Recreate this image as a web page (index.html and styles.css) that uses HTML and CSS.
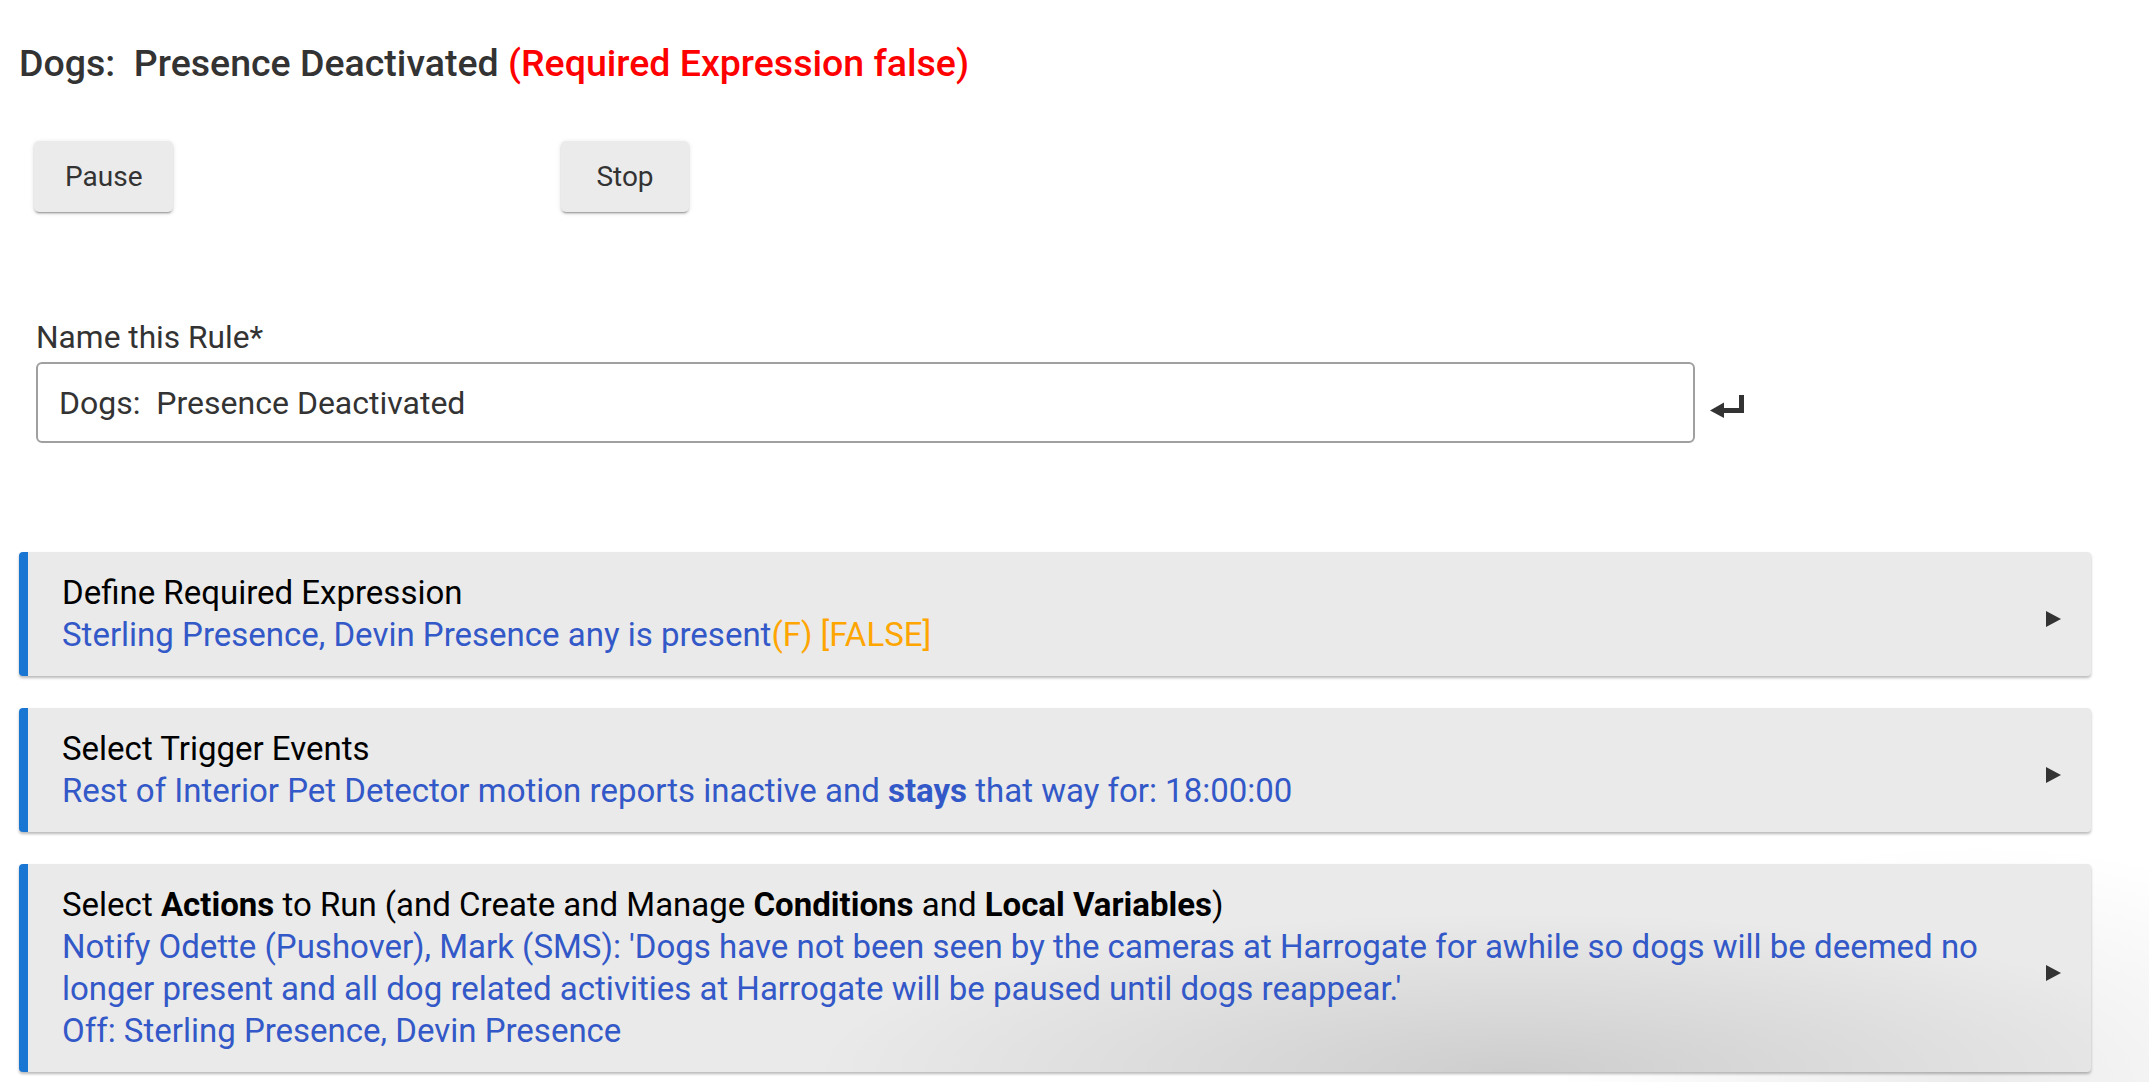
FILE: index.html
```html
<!DOCTYPE html>
<html lang="en">
<head>
    <meta charset="UTF-8">
    <meta name="viewport" content="width=device-width, initial-scale=1.0">
    <title>Dogs: Presence Deactivated</title>
    <link rel="stylesheet" href="styles.css">
</head>
<body>
    <div class="page">
        <h2 class="rule-title">Dogs:&nbsp; Presence Deactivated <span class="state-false">(Required Expression false)</span></h2>

        <div class="button-row">
            <div class="cell"><button class="btn">Pause</button></div>
            <div class="cell"><button class="btn">Stop</button></div>
        </div>

        <div class="name-field">
            <label for="ruleName">Name this Rule*</label>
            <div class="input-row">
                <input id="ruleName" type="text" value="Dogs:  Presence Deactivated">
                <svg class="enter-icon" viewBox="0 0 35 23" aria-hidden="true">
                    <rect x="29" y="0" width="5" height="18" fill="#333"/>
                    <rect x="13" y="13" width="21" height="5" fill="#333"/>
                    <polygon points="0,15.5 14,7.5 14,23" fill="#333"/>
                </svg>
            </div>
        </div>

        <div class="sections">
            <div class="section-card">
                <div class="section-text">
                    <div class="section-title">Define Required Expression</div>
                    <div class="section-desc">Sterling Presence, Devin Presence any is present<span class="eval">(F) [FALSE]</span></div>
                </div>
                <svg class="arrow" viewBox="0 0 15 16"><polygon points="0,0 15,8 0,16" fill="#333"/></svg>
            </div>

            <div class="section-card">
                <div class="section-text">
                    <div class="section-title">Select Trigger Events</div>
                    <div class="section-desc">Rest of Interior Pet Detector motion reports inactive and <b>stays</b> that way for: 18:00:00</div>
                </div>
                <svg class="arrow" viewBox="0 0 15 16"><polygon points="0,0 15,8 0,16" fill="#333"/></svg>
            </div>

            <div class="section-card shaded">
                <div class="section-text">
                    <div class="section-title">Select <b>Actions</b> to Run (and Create and Manage <b>Conditions</b> and <b>Local Variables</b>)</div>
                    <div class="section-desc">Notify Odette (Pushover), Mark (SMS): 'Dogs have not been seen by the cameras at Harrogate for awhile so dogs will be deemed no longer present and all dog related activities at Harrogate will be paused until dogs reappear.'</div>
                    <div class="section-desc">Off: Sterling Presence, Devin Presence</div>
                </div>
                <svg class="arrow" viewBox="0 0 15 16"><polygon points="0,0 15,8 0,16" fill="#333"/></svg>
            </div>
        </div>
    </div>
</body>
</html>
```

FILE: styles.css
```css
body {
    margin: 0;
    font-family: Roboto, "Liberation Sans", sans-serif;
    background-color: #fff;
    color: #333;
}
.page {
    padding: 42px 58px 10px 19px;
    background-image: radial-gradient(ellipse 420px 240px at 92% 100%, rgba(0, 0, 0, 0.08), rgba(0, 0, 0, 0));
}
.rule-title {
    margin: 0;
    font-size: 37.5px;
    font-weight: 500;
    line-height: 42px;
    color: #333;
}
.state-false {
    color: #f00;
}
.button-row {
    display: grid;
    grid-template-columns: 527px 527px;
    padding-left: 15px;
    margin-top: 57px;
}
.cell {
    justify-self: start;
}
.btn {
    font-family: inherit;
    font-size: 28px;
    color: #333;
    background-color: #ebebeb;
    border: none;
    border-radius: 5px;
    height: 71px;
    min-width: 128px;
    padding: 0 31px;
    cursor: pointer;
    box-shadow: 0 2px 2px 0 rgba(0, 0, 0, 0.14), 0 3px 1px -2px rgba(0, 0, 0, 0.2), 0 1px 5px 0 rgba(0, 0, 0, 0.12);
}
.name-field {
    margin-top: 105px;
    padding-left: 17px;
}
.name-field label {
    display: block;
    font-size: 31.7px;
    line-height: 42px;
    color: #333;
}
.input-row {
    display: flex;
    align-items: center;
    gap: 15px;
    margin-top: 3px;
}
.input-row input {
    box-sizing: border-box;
    width: 1659px;
    height: 81px;
    border: 2px solid #a0a0a0;
    border-radius: 6px;
    padding: 0 21px;
    font-family: inherit;
    font-size: 32px;
    color: #333;
    outline: none;
}
.enter-icon {
    width: 35px;
    height: 23px;
    margin-top: 8px;
}
.sections {
    margin-top: 109px;
    display: flex;
    flex-direction: column;
    gap: 32px;
}
.section-card {
    display: flex;
    align-items: center;
    background-color: #eaeaea;
    border-left: 9px solid #1976d2;
    border-radius: 4px;
    padding: 20px 30px 20px 34px;
    box-shadow: 0 2px 3px rgba(0, 0, 0, 0.28);
}
.section-card.shaded {
    background-image: radial-gradient(ellipse 700px 160px at 72% 100%, rgba(0, 0, 0, 0.12), rgba(0, 0, 0, 0));
}
.section-text {
    flex: 1;
    font-size: 33px;
    line-height: 42px;
    color: #000;
}
.section-desc {
    color: #3358c8;
}
.eval {
    color: #ffa500;
}
.arrow {
    width: 15px;
    height: 16px;
    margin: 10px 0 0 36px;
    flex-shrink: 0;
}
```
